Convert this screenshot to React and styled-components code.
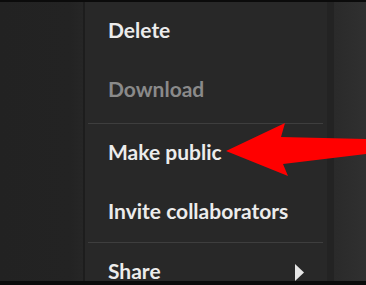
import React from "react";
import styled, { createGlobalStyle } from "styled-components";

const GlobalStyle = createGlobalStyle`
  html, body {
    margin: 0;
    padding: 0;
    background: #0b0b0b;
  }
  body {
    font-family: "Lato", "Noto Sans", sans-serif;
  }
`;

const Screen = styled.div`
  width: 366px;
  height: 285px;
  display: flex;
  flex-direction: column;
  overflow: hidden;
  position: relative;
`;

const EdgeBar = styled.div`
  height: ${(p) => p.$h}px;
  background: #0b0b0b;
  flex-shrink: 0;
`;

const Main = styled.div`
  flex: 1;
  display: flex;
  min-height: 0;
`;

const LeftPane = styled.div`
  width: 83px;
  background: linear-gradient(90deg, #222222 0%, #232323 85%, #262626 100%);
  border-right: 2px solid #1d1d1d;
`;

const Menu = styled.div`
  width: 242px;
  background: #282828;
  display: flex;
  flex-direction: column;
`;

const Item = styled.div`
  height: 59px;
  box-sizing: border-box;
  display: flex;
  align-items: center;
  justify-content: space-between;
  padding: 0 22px 5px 23px;
  font-size: 21px;
  font-weight: 700;
  color: ${(p) => (p.$disabled ? "#8a8a8a" : "#ececec")};
  flex-shrink: 0;
`;

const Separator = styled.div`
  height: 1px;
  margin: ${(p) => (p.$first ? "3px" : "0")} 4px 0 3px;
  background: #3e3e3e;
  flex-shrink: 0;
`;

const Gutter = styled.div`
  width: 7px;
  background: #232323;
`;

const RightPane = styled.div`
  flex: 1;
  background: linear-gradient(90deg, #2a2a2a 0%, #303030 100%);
`;

const CaretBox = styled.span`
  display: flex;
  padding-top: 5px;
`;

const Caret = () => (
  <CaretBox>
    <svg width="10" height="17" viewBox="0 0 10 17">
      <polygon points="0,0 0,17 9,8.5" fill="#e6e6e6" />
    </svg>
  </CaretBox>
);

const Annotation = styled.svg`
  position: absolute;
  left: 0;
  top: 0;
  pointer-events: none;
`;

const App = () => (
  <Screen>
    <GlobalStyle />
    <EdgeBar $h={2} />
    <Main>
      <LeftPane />
      <Menu>
        <Item>Delete</Item>
        <Item $disabled>Download</Item>
        <Separator $first />
        <Item>Make public</Item>
        <Item>Invite collaborators</Item>
        <Separator />
        <Item>
          Share
          <Caret />
        </Item>
      </Menu>
      <Gutter />
      <RightPane />
    </Main>
    <EdgeBar $h={4} />
    <Annotation width="366" height="285" viewBox="0 0 366 285">
      <polygon
        points="226,151 285,123 281,137 366,139 366,154 283,164 288,176"
        fill="#ff0000"
      />
    </Annotation>
  </Screen>
);

export default App;
